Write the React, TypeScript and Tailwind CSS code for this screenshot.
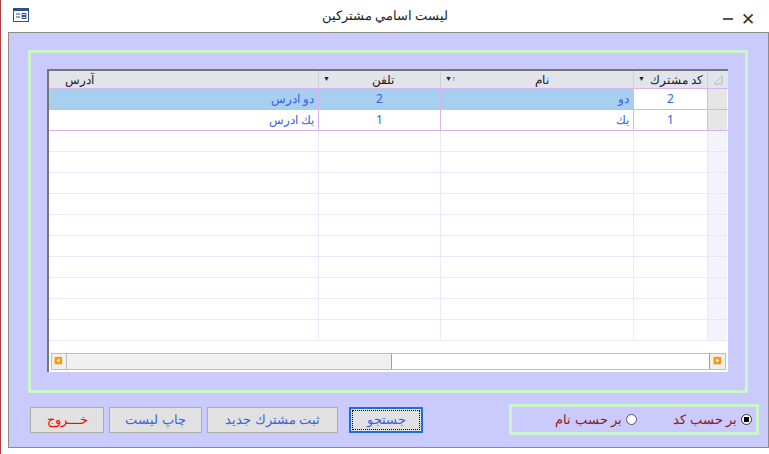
const font = "font-['Tahoma','DejaVu_Sans','Noto_Sans',sans-serif]";

function Cell({ w, children, className = "" }: { w: string; children?: React.ReactNode; className?: string }) {
  return <div className={`${w} shrink-0 h-full border-r border-[#d9b3f0] flex items-center px-1 ${className}`}>{children}</div>;
}

function Row({ sel, code, name, tel, addr }: { sel?: boolean; code?: string; name?: string; tel?: string; addr?: string }) {
  const bg = sel ? "bg-[#a6cff0]" : "bg-white";
  return (
    <div className="flex h-[21px] border-b border-[#d9b3f0] text-[12px] text-[#3b62e0]">
      <Cell w="w-[270px]" className={`${bg} justify-end`}>{addr}</Cell>
      <Cell w="w-[122px]" className={`${bg} justify-center`}>{tel}</Cell>
      <Cell w="w-[193px]" className={`${bg} justify-end`}>{name}</Cell>
      <Cell w="w-[74px]" className="bg-white justify-center">{code}</Cell>
      <div className="w-[19px] shrink-0 bg-[#e6e6e6]" />
    </div>
  );
}

function EmptyRow() {
  return (
    <div className="flex h-[21px] border-b border-[#f0e6fa]">
      <div className="w-[270px] border-r border-[#f0e6fa]" />
      <div className="w-[122px] border-r border-[#f0e6fa]" />
      <div className="w-[193px] border-r border-[#f0e6fa]" />
      <div className="w-[74px] border-r border-[#f0e6fa]" />
      <div className="w-[19px] bg-[#f3f3fb]" />
    </div>
  );
}

function Button({ label, w, red, active }: { label: string; w: string; red?: boolean; active?: boolean }) {
  return (
    <div
      className={`${w} h-[26px] shrink-0 whitespace-nowrap flex items-center justify-center text-[13px] ${red ? "text-[#ff0000]" : "text-[#3b62e0]"} ${
        active ? "bg-[#e1e1e1] border-2 border-[#1a6fd8] outline outline-1 outline-dotted outline-black -outline-offset-4" : "bg-[#e1e1e1] border border-[#adadad]"
      }`}
      dir="rtl"
    >
      {label}
    </div>
  );
}

export default function App() {
  return (
    <div className={`${font} w-[769px] h-[454px] bg-white border-l border-[#b04040] flex flex-col`}>
      <div className="h-[32px] flex items-center relative">
        <svg className="absolute left-[12px] top-[8px]" width="16" height="14" viewBox="0 0 16 14">
          <rect x="0.5" y="0.5" width="15" height="13" fill="#fff" stroke="#2f4f8f" />
          <rect x="1" y="1" width="14" height="2" fill="#2f4f8f" />
          <path d="M3 6h4M3 9h4M9 5.5h4v2h-4zM9 8.5h4v2h-4z" stroke="#2f4f8f" fill="none" />
        </svg>
        <div className="flex-1 text-center text-[13px] text-[#222]" dir="rtl">ليست اسامي مشتركين</div>
        <div className="absolute right-[36px] top-[18px] w-[10px] h-[2px] bg-[#555]" />
        <div className="absolute right-[14px] top-[6px] text-[17px] text-[#333]">✕</div>
      </div>
      <div className="ml-[7px] h-[416px] w-[761px] bg-[#cacafd] border border-[#8c8c8c] flex flex-col">
        <div className="mt-[17px] ml-[19px] w-[720px] h-[343px] border-[3px] border-[#ccf5cc] pt-[16px] pl-[16px]">
          <div className="w-[681px] h-[303px] bg-white border-t-2 border-l-2 border-[#767676] flex flex-col overflow-hidden">
            <div className="flex h-[18px] bg-[#e1e4ea] border-b border-[#d9b3f0] text-[12px] text-[#222]">
              <div className="w-[270px] h-full border-r border-[#d0d0d0] flex items-center px-4">آدرس</div>
              <div className="w-[122px] h-full border-r border-[#d0d0d0] flex items-center px-1">
                <span className="text-[7px]">▼</span>
                <span className="flex-1 text-center">تلفن</span>
              </div>
              <div className="w-[193px] h-full border-r border-[#d0d0d0] flex items-center px-1">
                <span className="text-[7px]">▼↑</span>
                <span className="flex-1 text-center">نام</span>
              </div>
              <div className="w-[74px] h-full border-r border-[#d0d0d0] flex items-center px-1">
                <span className="text-[7px]">▼</span>
                <span className="flex-1 text-right" dir="rtl">كد مشترك</span>
              </div>
              <div className="w-[19px] h-full flex items-start justify-center">
                <svg width="10" height="10" className="mt-1"><path d="M9 1 L9 9 L1 9 Z" fill="none" stroke="#bbb" /></svg>
              </div>
            </div>
            <Row sel code="2" name="دو" tel="2" addr="دو ادرس" />
            <Row code="1" name="يك" tel="1" addr="يك ادرس" />
            {Array.from({ length: 10 }).map((_, i) => <EmptyRow key={i} />)}
            <div className="flex-1" />
            <div className="h-[17px] mx-[2px] mb-[2px] flex border border-[#bdbdbd] bg-[#f0f0f0]">
              <div className="w-[15px] border-r border-[#bdbdbd] flex items-center justify-center text-[7px] text-[#555]">◀</div>
              <div className="w-[324px]" />
              <div className="flex-1 bg-white border-x border-[#a0a0a0]" />
              <div className="w-[15px] flex items-center justify-center text-[7px] text-[#555]">▶</div>
            </div>
          </div>
        </div>
        <div className="flex items-center mt-[11px] pl-[21px] pr-[9px]">
          <div className="flex gap-[5px] items-center">
            <Button label="خـــروج" w="w-[74px]" red />
            <Button label="چاپ ليست" w="w-[93px]" />
            <Button label="ثبت مشترك جديد" w="w-[131px]" />
            <div className="w-[1px]" />
            <Button label="جستجو" w="w-[74px]" active />
          </div>
          <div className="flex-1" />
          <div className="w-[250px] h-[31px] border-[3px] border-[#ccf5cc] flex items-center justify-start gap-[36px] pr-[4px] text-[13px] text-[#8b1a1a] whitespace-nowrap" dir="rtl">
            <div className="flex items-center gap-1">
              <span className="w-[11px] h-[11px] rounded-full border border-[#333] bg-white flex items-center justify-center"><span className="w-[5px] h-[5px] bg-black" /></span>
              بر حسب كد
            </div>
            <div className="flex items-center gap-1">
              <span className="w-[11px] h-[11px] rounded-full border border-[#555] bg-white" />
              بر حسب نام
            </div>
          </div>
        </div>
      </div>
    </div>
  );
}
